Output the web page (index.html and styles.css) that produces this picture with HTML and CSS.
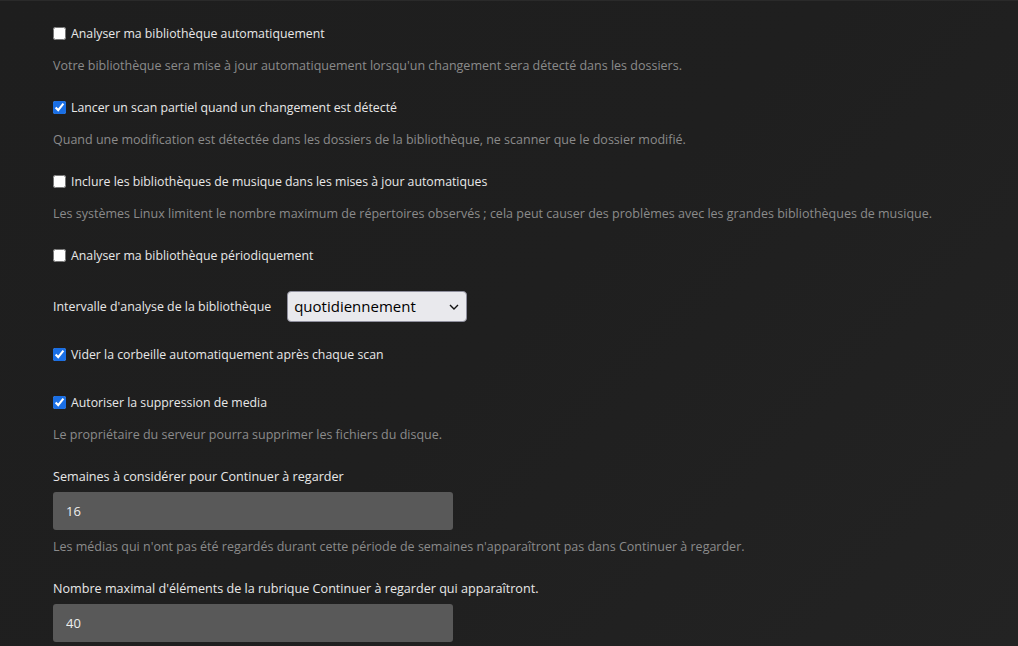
FILE: index.html
```html
<!DOCTYPE html>
<html lang="fr">
<head>
<meta charset="utf-8">
<title>Bibliothèque</title>
<link rel="stylesheet" href="styles.css">
</head>
<body>
<div class="topline"></div>
<main class="settings">
  <div class="group has-desc">
    <label class="check-row"><input type="checkbox"><span>Analyser ma bibliothèque automatiquement</span></label>
    <p class="desc">Votre bibliothèque sera mise à jour automatiquement lorsqu'un changement sera détecté dans les dossiers.</p>
  </div>
  <div class="group has-desc">
    <label class="check-row"><input type="checkbox" checked><span>Lancer un scan partiel quand un changement est détecté</span></label>
    <p class="desc">Quand une modification est détectée dans les dossiers de la bibliothèque, ne scanner que le dossier modifié.</p>
  </div>
  <div class="group has-desc">
    <label class="check-row"><input type="checkbox"><span>Inclure les bibliothèques de musique dans les mises à jour automatiques</span></label>
    <p class="desc">Les systèmes Linux limitent le nombre maximum de répertoires observés ; cela peut causer des problèmes avec les grandes bibliothèques de musique.</p>
  </div>
  <div class="group before-select">
    <label class="check-row"><input type="checkbox"><span>Analyser ma bibliothèque périodiquement</span></label>
  </div>
  <div class="group select-group">
    <label class="select-label" for="interval">Intervalle d'analyse de la bibliothèque</label>
    <div class="select-wrap">
      <select id="interval" class="select">
        <option>quotidiennement</option>
      </select>
      <svg class="chev" width="10" height="6" viewBox="0 0 10 6"><path d="M1 1l4 4 4-4" fill="none" stroke="#111" stroke-width="1.4"/></svg>
    </div>
  </div>
  <div class="group plain">
    <label class="check-row"><input type="checkbox" checked><span>Vider la corbeille automatiquement après chaque scan</span></label>
  </div>
  <div class="group has-desc last-desc">
    <label class="check-row"><input type="checkbox" checked><span>Autoriser la suppression de media</span></label>
    <p class="desc">Le propriétaire du serveur pourra supprimer les fichiers du disque.</p>
  </div>
  <div class="group field">
    <label class="field-label" for="weeks">Semaines à considérer pour Continuer à regarder</label>
    <input id="weeks" class="text-input" type="text" value="16">
    <p class="desc field-desc">Les médias qui n'ont pas été regardés durant cette période de semaines n'apparaîtront pas dans Continuer à regarder.</p>
  </div>
  <div class="group field">
    <label class="field-label" for="max">Nombre maximal d'éléments de la rubrique Continuer à regarder qui apparaîtront.</label>
    <input id="max" class="text-input" type="text" value="40">
  </div>
</main>
</body>
</html>
```

FILE: styles.css
```css
html, body {
  margin: 0;
  padding: 0;
  height: 100%;
  overflow: hidden;
}
body {
  background: linear-gradient(135deg, #1e1e1e 0%, #1f1f1f 50%, #232323 100%);
  font-family: "Open Sans", "Noto Sans", sans-serif;
  color: #e8e8e8;
}
.topline {
  height: 1px;
  background: #2a2a2a;
}
.settings {
  padding: 22px 0 0 53px;
}
.group {
  display: flex;
  flex-direction: column;
  align-items: flex-start;
}
.group.has-desc { margin-bottom: 22px; }
.group.has-desc.last-desc { margin-bottom: 23px; }
.group.before-select { margin-bottom: 25px; }
.group.select-group { margin-bottom: 22px; }
.group.plain { margin-bottom: 28px; }
.group.field { margin-bottom: 23px; }

.check-row {
  display: flex;
  align-items: center;
  height: 20px;
  font-size: 12.3px;
  color: #e8e8e8;
  cursor: pointer;
}
.check-row input {
  margin: 0 5px 0 0;
  width: 13px;
  height: 13px;
  accent-color: #1a6fe5;
}
.desc {
  margin: 14px 0 0;
  font-size: 12.5px;
  line-height: 18px;
  color: #8b8b8b;
}
.select-group {
  flex-direction: row !important;
  align-items: center !important;
  height: 32px;
}
.select-label {
  font-size: 12.4px;
  color: #e8e8e8;
  margin-right: 16px;
}
.select-wrap {
  position: relative;
}
.select {
  appearance: none;
  -webkit-appearance: none;
  width: 180px;
  height: 31px;
  padding: 0 24px 0 6px;
  font-family: "Open Sans", "Noto Sans", sans-serif;
  font-size: 15px;
  color: #000;
  background: #e9e9ed;
  border: 1px solid #8f8f9d;
  border-radius: 4px;
  display: block;
}
.chev {
  position: absolute;
  right: 8px;
  top: 13px;
  pointer-events: none;
}
.field-label {
  font-size: 12.6px;
  line-height: 20px;
  color: #e8e8e8;
}
.text-input {
  margin-top: 5px;
  width: 400px;
  height: 38px;
  box-sizing: border-box;
  padding: 0 13px;
  border: none;
  border-radius: 3px;
  background: #595959;
  color: #eeeeee;
  font-family: "Open Sans", "Noto Sans", sans-serif;
  font-size: 13px;
}
.field-desc {
  margin-top: 8px;
}
```
